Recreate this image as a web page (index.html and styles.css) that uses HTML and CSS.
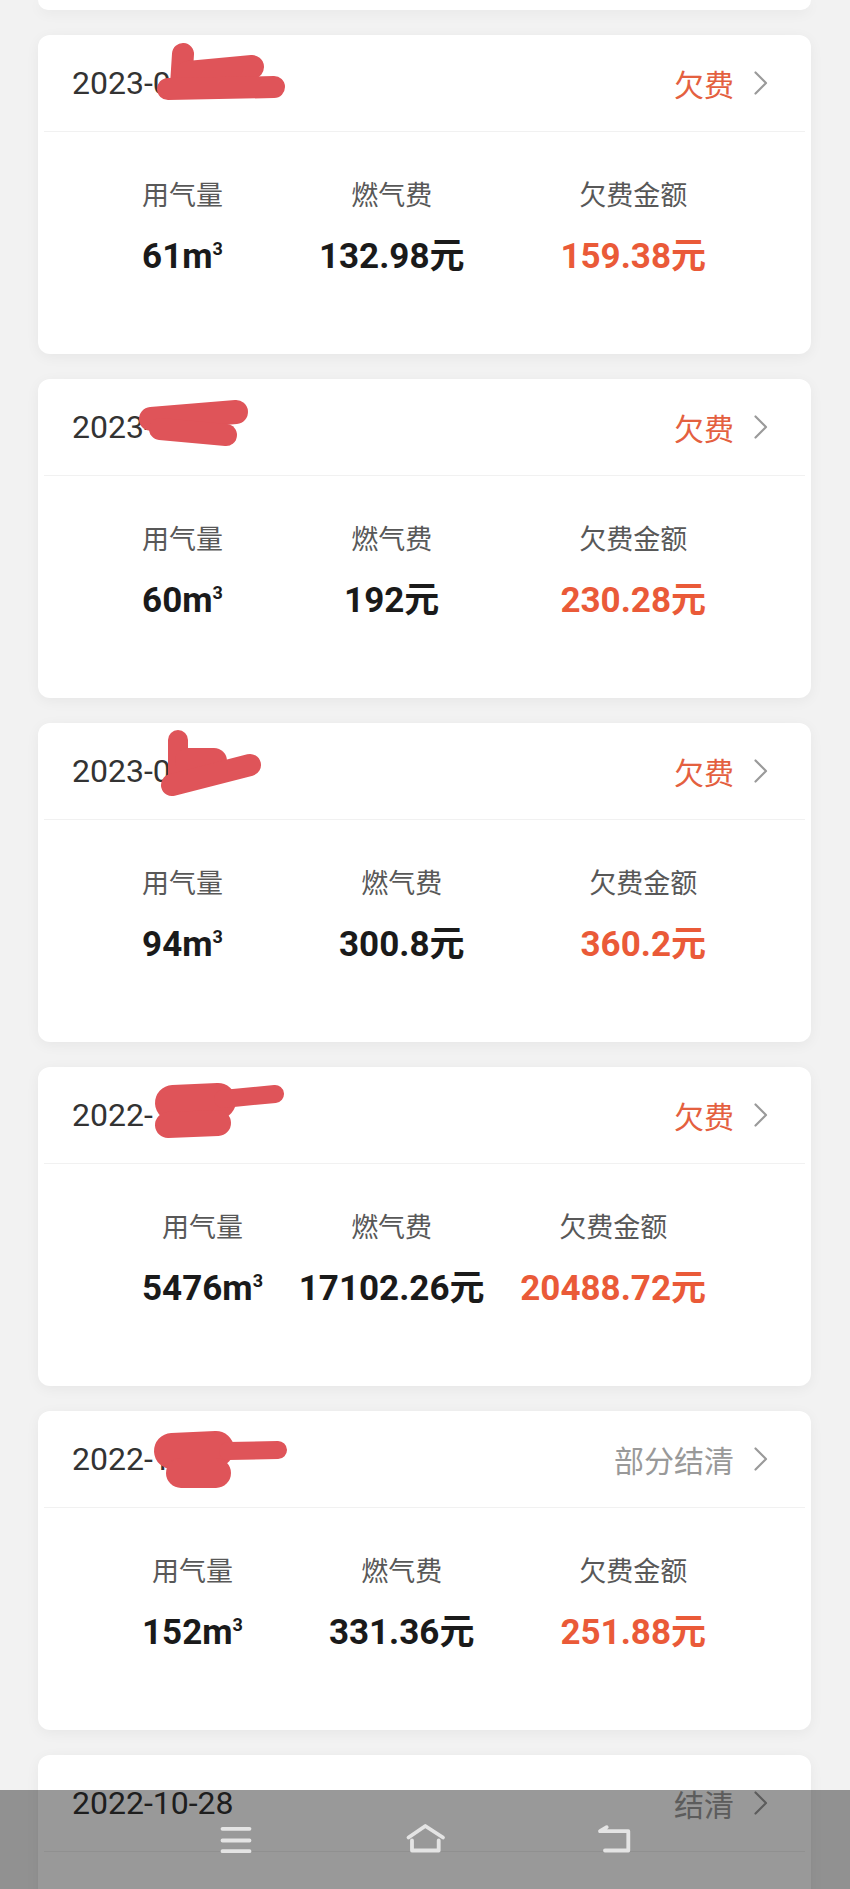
FILE: index.html
```html
<!DOCTYPE html>
<html lang="zh-CN">
<head>
  <meta charset="UTF-8">
  <title>账单列表</title>
  <link rel="stylesheet" href="styles.css">
</head>
<body>
  <div class="page">
    <div class="bill-list">
      <div class="bill bill-stub"></div>

      <div class="bill">
        <div class="bill-head">
          <span class="bill-date">2023-0</span>
          <span class="bill-status owe">欠费<svg class="chevron" viewBox="0 0 14 24"><path d="M1.5 1.5 L12 12 L1.5 22.5"/></svg></span>
        </div>
        <div class="bill-body">
          <div class="stat"><div class="stat-label">用气量</div><div class="stat-value">61m<sup>3</sup></div></div>
          <div class="stat"><div class="stat-label">燃气费</div><div class="stat-value">132.98元</div></div>
          <div class="stat"><div class="stat-label">欠费金额</div><div class="stat-value owe">159.38元</div></div>
        </div>
        <svg class="scribble" viewBox="0 0 300 97">
          <path d="M145 19 L143 50" stroke-width="22"/>
          <path d="M150 38 L214 32" stroke-width="24"/>
          <path d="M130 54 L236 52" stroke-width="22"/>
        </svg>
      </div>

      <div class="bill">
        <div class="bill-head">
          <span class="bill-date">2023-</span>
          <span class="bill-status owe">欠费<svg class="chevron" viewBox="0 0 14 24"><path d="M1.5 1.5 L12 12 L1.5 22.5"/></svg></span>
        </div>
        <div class="bill-body">
          <div class="stat"><div class="stat-label">用气量</div><div class="stat-value">60m<sup>3</sup></div></div>
          <div class="stat"><div class="stat-label">燃气费</div><div class="stat-value">192元</div></div>
          <div class="stat"><div class="stat-label">欠费金额</div><div class="stat-value owe">230.28元</div></div>
        </div>
        <svg class="scribble" viewBox="0 0 300 97">
          <path d="M113 40 L198 33" stroke-width="24"/>
          <path d="M122 50 L188 56" stroke-width="22"/>
        </svg>
      </div>

      <div class="bill">
        <div class="bill-head">
          <span class="bill-date">2023-0</span>
          <span class="bill-status owe">欠费<svg class="chevron" viewBox="0 0 14 24"><path d="M1.5 1.5 L12 12 L1.5 22.5"/></svg></span>
        </div>
        <div class="bill-body">
          <div class="stat"><div class="stat-label">用气量</div><div class="stat-value">94m<sup>3</sup></div></div>
          <div class="stat"><div class="stat-label">燃气费</div><div class="stat-value">300.8元</div></div>
          <div class="stat"><div class="stat-label">欠费金额</div><div class="stat-value owe">360.2元</div></div>
        </div>
        <svg class="scribble" viewBox="0 0 300 97">
          <path d="M140 17 L140 56" stroke-width="20"/>
          <path d="M150 38 L176 38" stroke-width="26"/>
          <path d="M134 62 L212 42" stroke-width="22"/>
        </svg>
      </div>

      <div class="bill">
        <div class="bill-head">
          <span class="bill-date">2022-</span>
          <span class="bill-status owe">欠费<svg class="chevron" viewBox="0 0 14 24"><path d="M1.5 1.5 L12 12 L1.5 22.5"/></svg></span>
        </div>
        <div class="bill-body">
          <div class="stat"><div class="stat-label">用气量</div><div class="stat-value">5476m<sup>3</sup></div></div>
          <div class="stat"><div class="stat-label">燃气费</div><div class="stat-value">17102.26元</div></div>
          <div class="stat"><div class="stat-label">欠费金额</div><div class="stat-value owe">20488.72元</div></div>
        </div>
        <svg class="scribble" viewBox="0 0 300 97">
          <path d="M135 36 L180 34" stroke-width="36"/>
          <path d="M130 58 L180 56" stroke-width="26"/>
          <path d="M185 32 L237 27" stroke-width="18"/>
        </svg>
      </div>

      <div class="bill">
        <div class="bill-head">
          <span class="bill-date">2022-1</span>
          <span class="bill-status">部分结清<svg class="chevron" viewBox="0 0 14 24"><path d="M1.5 1.5 L12 12 L1.5 22.5"/></svg></span>
        </div>
        <div class="bill-body">
          <div class="stat"><div class="stat-label">用气量</div><div class="stat-value">152m<sup>3</sup></div></div>
          <div class="stat"><div class="stat-label">燃气费</div><div class="stat-value">331.36元</div></div>
          <div class="stat"><div class="stat-label">欠费金额</div><div class="stat-value owe">251.88元</div></div>
        </div>
        <svg class="scribble" viewBox="0 0 300 97">
          <path d="M134 40 L178 38" stroke-width="36"/>
          <path d="M143 62 L178 62" stroke-width="30"/>
          <path d="M190 40 L240 39" stroke-width="18"/>
        </svg>
      </div>

      <div class="bill">
        <div class="bill-head">
          <span class="bill-date">2022-10-28</span>
          <span class="bill-status">结清<svg class="chevron" viewBox="0 0 14 24"><path d="M1.5 1.5 L12 12 L1.5 22.5"/></svg></span>
        </div>
      </div>
    </div>

    <!-- system navigation bar -->
    <div class="nav-bar">
      <svg class="nav-icon" viewBox="0 0 44 44">
        <path d="M8.5 10.8 H35.5 M8.5 22.5 H35.5 M8.5 33.2 H35.5"/>
      </svg>
      <svg class="nav-icon" viewBox="0 0 44 44">
        <path d="M5.5 19.5 L22.3 8 L40 19.5"/>
        <path d="M9 22.5 V32.5 H35.7 V22.5"/>
      </svg>
      <svg class="nav-icon" viewBox="0 0 44 44">
        <path d="M14.7 9.2 L8 13.2 H36.3 V32.5 H13"/>
      </svg>
    </div>
  </div>
</body>
</html>
```

FILE: styles.css
```css
html, body {
  margin: 0;
  padding: 0;
}

body {
  font-family: Roboto, "Noto Sans CJK SC", sans-serif;
  background: #f2f2f2;
  color: #222;
}

.page {
  height: 100vh;
  overflow: hidden;
}

.bill-list {
  display: flex;
  flex-direction: column;
  gap: 25px;
  padding: 0 39px 0 38px;
}

.bill {
  position: relative;
  flex: none;
  height: 319px;
  background: #fff;
  border-radius: 12px;
  box-shadow: 0 3px 14px rgba(0, 0, 0, 0.05);
}

.bill-stub {
  height: 10px;
  border-radius: 0 0 12px 12px;
}

.bill-head {
  display: flex;
  justify-content: space-between;
  align-items: center;
  height: 96px;
  margin: 0 6px;
  padding: 0 37px 0 28px;
  border-bottom: 1px solid #f1f1f1;
}

.bill-date {
  font-size: 32px;
  color: #333;
}

.bill-status {
  display: flex;
  align-items: center;
  gap: 20px;
  font-size: 30px;
  color: #999;
}

.bill-status.owe {
  color: #e4603f;
}

.chevron {
  width: 14px;
  height: 24px;
  fill: none;
  stroke: #9a9a9a;
  stroke-width: 2.2;
  stroke-linecap: round;
  stroke-linejoin: round;
}

.bill-body {
  display: flex;
  justify-content: space-between;
  padding: 46px 105px 0 104px;
}

.stat {
  text-align: center;
}

.stat-label {
  font-size: 27px;
  line-height: 36px;
  color: #585858;
}

.stat-value {
  margin-top: 21px;
  font-size: 35px;
  line-height: 44px;
  font-weight: bold;
  color: #1a1a1a;
}

.stat-value.owe {
  color: #ea5a38;
}

.stat-value sup {
  font-size: 18px;
  line-height: 0;
}

.scribble {
  position: absolute;
  left: 0;
  top: 0;
  width: 300px;
  height: 97px;
  fill: none;
  stroke: #df5459;
  stroke-linecap: round;
  stroke-linejoin: round;
}

.nav-bar {
  position: fixed;
  left: 0;
  right: 0;
  bottom: 0;
  height: 99px;
  display: flex;
  justify-content: center;
  align-items: center;
  gap: 145px;
  background: rgba(0, 0, 0, 0.4);
}

.nav-icon {
  width: 44px;
  height: 44px;
  fill: none;
  stroke: #e4e4e4;
  stroke-width: 3.8;
  stroke-linecap: round;
  stroke-linejoin: round;
}
```
